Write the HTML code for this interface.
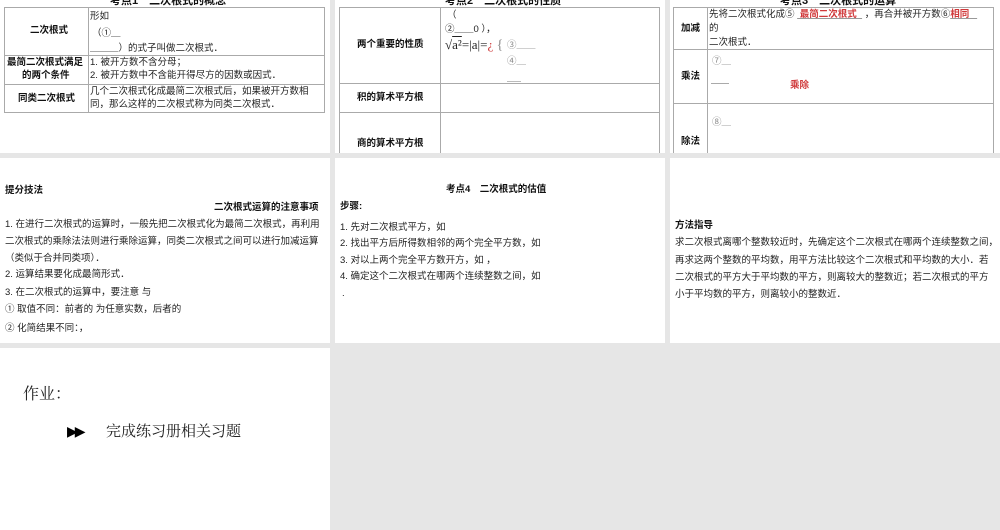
<!DOCTYPE html>
<html><head><meta charset="utf-8">
<style>
*{margin:0;padding:0;box-sizing:border-box}
body{width:1000px;height:530px;background:#e6e6e6;position:relative;overflow:hidden;font-family:"Liberation Sans","Noto Sans CJK SC",sans-serif;color:#222}
.s{position:absolute;background:#fff;overflow:hidden}
.a{position:absolute;white-space:nowrap}
.b{font-weight:bold;color:#111}
.line{position:absolute;background:#aaa}
.f{font-size:9.5px;line-height:12px}
.r{color:#d0393b;font-weight:bold}
</style></head><body>

<!-- Slide 1 -->
<div class="s" style="left:0;top:0;width:330px;height:153px">
  <div class="a b" style="left:110px;top:-8px;font-size:11px">考点1　二次根式的概念</div>
  <div style="position:absolute;left:4px;top:7px;width:321px;height:106px;border:1px solid #aaa"></div>
  <div class="line" style="left:88px;top:7px;width:1px;height:106px"></div>
  <div class="line" style="left:4px;top:55px;width:321px;height:1px"></div>
  <div class="line" style="left:4px;top:84px;width:321px;height:1px"></div>
  <div class="a b f" style="left:30px;top:25px">二次根式</div>
  <div class="a f" style="left:90px;top:11px">形如</div>
  <div class="a f" style="left:92px;top:28px">（①＿</div>
  <div class="a f" style="left:90px;top:43px">＿＿＿）的式子叫做二次根式．</div>
  <div class="a b f" style="left:7px;top:57px">最简二次根式满足</div>
  <div class="a b f" style="left:22px;top:70px">的两个条件</div>
  <div class="a f" style="left:90px;top:57px">1. 被开方数不含分母；</div>
  <div class="a f" style="left:90px;top:70px">2. 被开方数中不含能开得尽方的因数或因式．</div>
  <div class="a b f" style="left:18px;top:93px">同类二次根式</div>
  <div class="a f" style="left:90px;top:86px">几个二次根式化成最简二次根式后，如果被开方数相</div>
  <div class="a f" style="left:90px;top:99px">同，那么这样的二次根式称为同类二次根式．</div>
</div>

<!-- Slide 2 -->
<div class="s" style="left:335px;top:0;width:330px;height:153px">
  <div class="a b" style="left:110px;top:-8px;font-size:11px">考点2　二次根式的性质</div>
  <div style="position:absolute;left:4px;top:7px;width:321px;height:160px;border:1px solid #aaa"></div>
  <div class="line" style="left:105px;top:7px;width:1px;height:150px"></div>
  <div class="line" style="left:4px;top:83px;width:321px;height:1px"></div>
  <div class="line" style="left:4px;top:112px;width:321px;height:1px"></div>
  <div class="a b f" style="left:22px;top:39px">两个重要的性质</div>
  <div class="a f" style="left:112px;top:10px">（</div>
  <div class="a f" style="left:110px;top:24px">②＿＿0 ），</div>
  <div class="a" style="left:110px;top:37px;font-family:'Liberation Serif',serif;font-size:13px">√<span style="text-decoration:overline">a²</span>=|a|=<span style="color:#c33">¿</span> <span style="font-size:14px;color:#888">{</span></div>
  <div class="a f" style="left:172px;top:40px;color:#888">③＿＿</div>
  <div class="a f" style="left:172px;top:56px;color:#888">④＿</div>
  <div class="a" style="left:172px;top:81px;width:14px;height:1px;background:#bbb"></div>
  <div class="a b f" style="left:22px;top:92px">积的算术平方根</div>
  <div class="a b f" style="left:22px;top:138px">商的算术平方根</div>
</div>

<!-- Slide 3 -->
<div class="s" style="left:670px;top:0;width:330px;height:153px">
  <div class="a b" style="left:110px;top:-8px;font-size:11px">考点3　二次根式的运算</div>
  <div style="position:absolute;left:3px;top:7px;width:321px;height:160px;border:1px solid #aaa"></div>
  <div class="line" style="left:37px;top:7px;width:1px;height:150px"></div>
  <div class="line" style="left:3px;top:49px;width:321px;height:1px"></div>
  <div class="line" style="left:3px;top:103px;width:321px;height:1px"></div>
  <div class="a b f" style="left:11px;top:23px">加减</div>
  <div class="a f" style="left:39px;top:9px">先将二次根式化成⑤ <span class="r" style="text-decoration:underline;text-decoration-color:#999">&nbsp;最简二次根式&nbsp;&nbsp;</span> ，再合并被开方数⑥<span class="r" style="text-decoration:underline;text-decoration-color:#999">相同&nbsp;&nbsp;&nbsp;</span></div>
  <div class="a f" style="left:39px;top:23px">的</div>
  <div class="a f" style="left:39px;top:37px">二次根式．</div>
  <div class="a b f" style="left:11px;top:71px">乘法</div>
  <div class="a f" style="left:42px;top:56px;color:#888">⑦＿</div>
  <div class="a" style="left:41px;top:83px;width:18px;height:1px;background:#aaa"></div>
  <div class="a r f" style="left:120px;top:80px">乘除</div>
  <div class="a f" style="left:42px;top:117px;color:#888">⑧＿</div>
  <div class="a b f" style="left:11px;top:136px">除法</div>
</div>

<!-- Row 2 -->
<div class="s" style="left:0;top:158px;width:330px;height:185px">
  <div class="a b f" style="left:5px;top:27px">提分技法</div>
  <div class="a b f" style="left:214px;top:44px">二次根式运算的注意事项</div>
  <div class="a f" style="left:5px;top:61px">1. 在进行二次根式的运算时，一般先把二次根式化为最简二次根式，再利用</div>
  <div class="a f" style="left:5px;top:78px">二次根式的乘除法法则进行乘除运算，同类二次根式之间可以进行加减运算</div>
  <div class="a f" style="left:5px;top:95px">（类似于合并同类项）．</div>
  <div class="a f" style="left:5px;top:111px">2. 运算结果要化成最简形式．</div>
  <div class="a f" style="left:5px;top:129px">3. 在二次根式的运算中，要注意 与</div>
  <div class="a f" style="left:5px;top:146px">① 取值不同：前者的 为任意实数，后者的</div>
  <div class="a f" style="left:5px;top:165px">② 化简结果不同：，</div>
</div>

<div class="s" style="left:335px;top:158px;width:330px;height:185px">
  <div class="a b f" style="left:111px;top:26px">考点4　二次根式的估值</div>
  <div class="a b f" style="left:5px;top:43px">步骤:</div>
  <div class="a f" style="left:5px;top:64px">1. 先对二次根式平方，如</div>
  <div class="a f" style="left:5px;top:80px">2. 找出平方后所得数相邻的两个完全平方数，如</div>
  <div class="a f" style="left:5px;top:97px">3. 对以上两个完全平方数开方，如 ，</div>
  <div class="a f" style="left:5px;top:113px">4. 确定这个二次根式在哪两个连续整数之间，如</div>
  <div class="a f" style="left:7px;top:130px">.</div>
</div>

<div class="s" style="left:670px;top:158px;width:330px;height:185px">
  <div class="a b f" style="left:5px;top:62px">方法指导</div>
  <div class="a f" style="left:5px;top:79px">求二次根式离哪个整数较近时，先确定这个二次根式在哪两个连续整数之间，</div>
  <div class="a f" style="left:5px;top:97px">再求这两个整数的平均数，用平方法比较这个二次根式和平均数的大小．若</div>
  <div class="a f" style="left:5px;top:114px">二次根式的平方大于平均数的平方，则离较大的整数近；若二次根式的平方</div>
  <div class="a f" style="left:5px;top:131px">小于平均数的平方，则离较小的整数近．</div>
</div>

<!-- Row 3 -->
<div class="s" style="left:0;top:348px;width:330px;height:182px">
  <div class="a" style="left:23px;top:33px;font-size:16px;font-family:'Liberation Serif','Noto Serif CJK SC',serif;color:#222">作业：</div>
  <div class="a" style="left:67px;top:76px;font-size:14px;font-family:'DejaVu Sans',sans-serif;letter-spacing:-3px;color:#000">▶▶</div>
  <div class="a" style="left:106px;top:72px;font-size:15px;font-family:'Liberation Serif','Noto Serif CJK SC',serif;color:#222">完成练习册相关习题</div>
</div>

</body></html>
